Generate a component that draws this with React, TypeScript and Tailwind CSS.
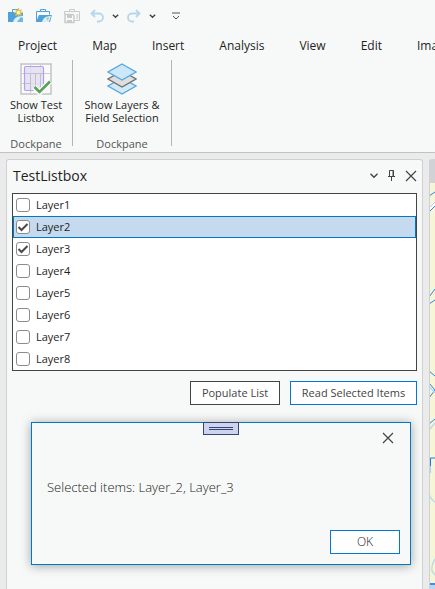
import { useState } from "react";

const tabs = ["Project", "Map", "Insert", "Analysis", "View", "Edit", "Imagery"];

const initialLayers = [
  { name: "Layer1", checked: false },
  { name: "Layer2", checked: true },
  { name: "Layer3", checked: true },
  { name: "Layer4", checked: false },
  { name: "Layer5", checked: false },
  { name: "Layer6", checked: false },
  { name: "Layer7", checked: false },
  { name: "Layer8", checked: false },
];

function NewProjectIcon() {
  return (
    <svg width="18" height="17" viewBox="0 0 18 17" fill="none">
      <path d="M0 4h15v10H0z" fill="#4da3d9" />
      <path d="M4.500 4V1.500h6V4" stroke="#4da3d9" />
      <path d="M5 14c1-4 4-6 10-6v6z" fill="#d9eef7" />
      <path d="M9 14l4-5 2 1v4z" fill="#6db9e4" />
      <path d="M10.500 0v9M6 4.500h9M7.500 1.500l6 6M13.500 1.500l-6 6" stroke="#e3c45c" strokeWidth="1.300" />
      <circle cx="10.500" cy="4.500" r="2.200" fill="#fff3b5" stroke="#e0bd4e" />
    </svg>
  );
}

function OpenProjectIcon() {
  return (
    <svg width="18" height="17" viewBox="0 0 18 17" fill="none">
      <path d="M.5 13.500v-10h13v3M4.500 3.500v-2h5v2" stroke="#4da3d9" />
      <path d="M3 7h13l-2 7H0z" fill="#4da3d9" />
      <path d="M6 14c1-4 4-6 9-6l-2 6z" fill="#d9eef7" />
      <path d="M10 10l3-1-1 4z" fill="#a9cf95" />
    </svg>
  );
}

function SaveIcon() {
  return (
    <svg width="18" height="17" viewBox="0 0 18 17" fill="none" stroke="#cacaca">
      <path d="M.5 6V3.500h15v9H11M5.500 3.500v-2h5v2" />
      <path d="M1 6.500h8L10 8v6.500H1z" fill="#f7f9f8" strokeWidth="1.500" />
      <path d="M3 7h5v3H3zM3 12h5v2H3z" fill="#cacaca" stroke="none" />
      <path d="M12 6h2.500v5H12z" fill="#dedede" stroke="none" />
    </svg>
  );
}

function UndoIcon({ flip = false }: { flip?: boolean }) {
  return (
    <svg width="14" height="14" viewBox="0 0 14 14" fill="none" stroke="#b5d7ee" strokeWidth="1.800" className={flip ? "-scale-x-100" : ""}>
      <path d="M5 1L1.500 4.500 5 8M1.500 4.500H9a4 4 0 0 1 0 8H7" />
    </svg>
  );
}

function Chevron({ wide = false }: { wide?: boolean }) {
  return (
    <svg width={wide ? 10 : 7} height={wide ? 7 : 6} viewBox="0 0 8 6" fill="none" stroke="#444" strokeWidth={wide ? 1.2 : 1.6}>
      <path d="M1 1.500l3 3 3-3" />
    </svg>
  );
}

function ListboxIcon() {
  return (
    <svg width="32" height="32" viewBox="0 0 32 32" fill="none">
      <path d="M1 1h30v30H1z" fill="#fafafa" stroke="#c4c4c4" strokeWidth="1.500" />
      <path d="M.5 10.500h31M.5 20.500h31M10.500.5v31M20.500.5v31" stroke="#cfcfcf" />
      <rect x="4.500" y="3.500" width="19" height="24" rx="1.500" fill="#e2dfef" fillOpacity=".85" stroke="#b59cf5" strokeWidth="1.200" />
      <path d="M5 10.500h18M10.500 10.500V27M15.500 10.500V27M20.500 10.500V27M5 20.500h5" stroke="#c3bdd1" />
      <path d="M14 24l5.500 5.500L30 18" stroke="#f7f9f8" strokeWidth="5.500" />
      <path d="M14.500 24l5 5L30 18.500" stroke="#5a9f5c" strokeWidth="2.500" />
    </svg>
  );
}

function LayersIcon() {
  return (
    <svg width="30" height="32" viewBox="0 0 30 32" strokeWidth="1.300">
      <path d="M15 15l14 8-14 8-14-8z" fill="#d3e8f6" stroke="#57a8dc" />
      <path d="M15 8l14 8-14 8-14-8z" fill="#dededf" stroke="#6f6f6f" />
      <path d="M15 1l14 8-14 8-14-8z" fill="#cce7f7" stroke="#57a8dc" />
    </svg>
  );
}

function CloseIcon() {
  return (
    <svg width="12" height="12" viewBox="0 0 12 12" fill="none" stroke="#444" strokeWidth="1.200">
      <path d="M1 1l10 10M11 1L1 11" />
    </svg>
  );
}

function PinIcon() {
  return (
    <svg width="8" height="11" viewBox="0 0 8 11" fill="none" stroke="#444">
      <path d="M1.500 6V.5h4V6M5 .5V6" />
      <path d="M0 6.500h7M3.500 7v4" />
    </svg>
  );
}

function MapSlice() {
  return (
    <svg width="6" height="406" viewBox="0 0 6 406" fill="none" className="block">
      <path d="M0 0h6v406H0z" fill="#f6f5d5" />
      <path d="M0 27l6-7" stroke="#fff" strokeWidth="4" />
      <path d="M0 25l6-6" stroke="#c8c8c8" />
      <path d="M0 13l3-2 3-2M0 29l6-6M0 114l6-8M0 121l6-4M0 188l6 5M0 200l6 7-6 8M0 241l6-5" stroke="#2f83f0" />
      <path d="M0 203l6 7M0 247l6-7M0 311q2 6 6 8M6 376q-4 6-3 12l3 4" stroke="#bcd9ee" strokeWidth="1.500" />
      <path d="M1.500 290v-15H6" stroke="#1677ee" />
      <path d="M1 283h1v7H1z" fill="#a8cef0" />
      <path d="M0 401h6" stroke="#3a8ff0" strokeWidth="2" />
      <path d="M0 402h6v4H0z" fill="#b9d7f0" />
      <path d="M0 0h1v406H0z" fill="#cfd0d1" />
    </svg>
  );
}

export default function App() {
  const [layers, setLayers] = useState(initialLayers);
  const toggle = (name: string) =>
    setLayers(layers.map((l) => (l.name === name ? { ...l, checked: !l.checked } : l)));

  return (
    <div className="flex min-h-screen flex-col overflow-hidden bg-[#ebebeb] font-['Open_Sans','Noto_Sans',sans-serif] text-[11px] leading-3 text-[#1e1e1e]">
      <header className="border-b border-[#c2c2c2] bg-[#f7f9f8]">
        <div className="flex h-8 items-center pl-2">
          <button aria-label="New project"><NewProjectIcon /></button>
          <button aria-label="Open project" className="ml-2.5"><OpenProjectIcon /></button>
          <button aria-label="Save" className="ml-2.5"><SaveIcon /></button>
          <button aria-label="Undo" className="ml-2"><UndoIcon /></button>
          <button aria-label="Undo history" className="ml-2"><Chevron /></button>
          <button aria-label="Redo" className="ml-2"><UndoIcon flip /></button>
          <button aria-label="Redo history" className="ml-2"><Chevron /></button>
          <button aria-label="Customize toolbar" className="ml-4">
            <svg width="8" height="9" viewBox="0 0 8 9" fill="none" stroke="#555"><path d="M0 1h8M1 4l3 3 3-3" /></svg>
          </button>
        </div>
        <nav className="flex h-7 items-center gap-[35px] overflow-hidden pl-[18px] text-xs">
          {tabs.map((t) => (
            <button key={t} className="shrink-0">{t}</button>
          ))}
        </nav>
        <div className="flex pb-1.5">
          <section className="flex h-[86px] w-[73px] flex-col items-center justify-between border-r border-[#b4b4b4] pt-[3px]">
            <button className="flex flex-col items-center gap-[3px]">
              <ListboxIcon />
              <span className="whitespace-nowrap leading-[13px]">Show Test<br />Listbox</span>
            </button>
            <h2 className="-mb-1 text-[#555]">Dockpane</h2>
          </section>
          <section className="flex h-[86px] w-[99px] flex-col items-center justify-between border-r border-[#b4b4b4] pt-[3px]">
            <button className="flex flex-col items-center gap-[3px]">
              <LayersIcon />
              <span className="whitespace-nowrap leading-[13px]">Show Layers &amp;<br />Field Selection</span>
            </button>
            <h2 className="-mb-1 text-[#555]">Dockpane</h2>
          </section>
        </div>
      </header>

      <main className="flex flex-1 gap-1.5 pt-1.5 pl-1.5">
        <section className="min-w-0 flex-1 rounded-t-[3px] border border-b-0 border-[#cfd0d1] bg-[#f7f9f8] px-[5px]">
          <div className="flex h-[33px] items-center pb-0.5">
            <h1 className="flex-1 pl-px text-sm">TestListbox</h1>
            <div className="flex items-center gap-[9px]">
              <button aria-label="Pane options"><Chevron wide /></button>
              <button aria-label="Auto hide"><PinIcon /></button>
              <button aria-label="Close pane"><CloseIcon /></button>
            </div>
          </div>
          <ul className="border border-[#444] bg-white">
            {layers.map((l) => (
              <li key={l.name} className={l.name === "Layer2" ? "border border-[#0079c1] bg-[#c5daee]" : "border border-transparent"}>
                <label className="flex h-5 items-center gap-1.5 pl-0.5">
                  <span className="grid size-3.5">
                    <input
                      type="checkbox"
                      checked={l.checked}
                      onChange={() => toggle(l.name)}
                      className="col-start-1 row-start-1 size-3.5 appearance-none rounded-[3px] border border-[#8c8c8c] bg-white"
                    />
                    {l.checked && (
                      <svg viewBox="0 0 14 14" className="pointer-events-none col-start-1 row-start-1 size-3.5" fill="none" stroke="#4a4a4a" strokeWidth="2">
                        <path d="M2.500 7l3 3L11.500 4" />
                      </svg>
                    )}
                  </span>
                  {l.name}
                </label>
              </li>
            ))}
          </ul>
          <div className="mt-2.5 flex justify-end gap-2.5 text-[#444]">
            <button className="h-6 w-[90px] border border-[#444] bg-white">Populate List</button>
            <button className="h-6 w-[127px] border border-[#0078d4] bg-white">Read Selected Items</button>
          </div>
          <div role="dialog" aria-label="Selected items" className="mt-[17px] mr-1.5 ml-[19px] border border-[#0079c1] bg-[#f7f9f8] pr-2.5 pb-2.5 pl-[15px] shadow-[0_1px_10px_rgba(0,0,0,0.35)]">
            <div className="-mt-px -mr-2.5 -ml-[15px] flex justify-center">
              <div className="flex h-[13px] w-9 flex-col items-center justify-center gap-px border border-[#3b4370] bg-[#ccd4ef]">
                <div className="h-px w-6 bg-[#3b4370]" />
                <div className="h-px w-6 bg-[#3b4370]" />
              </div>
            </div>
            <div className="-mt-[3px] flex justify-end pr-1.5">
              <button aria-label="Close message"><CloseIcon /></button>
            </div>
            <p className="pt-[35px] text-[13px] leading-4 font-light text-[#222]">Selected items: Layer_2, Layer_3</p>
            <div className="flex justify-end pt-[35px]">
              <button className="h-6 w-[70px] border border-[#0078d4] bg-white text-xs font-light text-[#222]">OK</button>
            </div>
          </div>
        </section>
        <aside aria-label="Map view" className="w-1.5 shrink-0 overflow-hidden rounded-tl-[3px] bg-[#f6f5d5]">
          <div className="h-6 bg-[#d1d2d6]" />
          <MapSlice />
        </aside>
      </main>
    </div>
  );
}
